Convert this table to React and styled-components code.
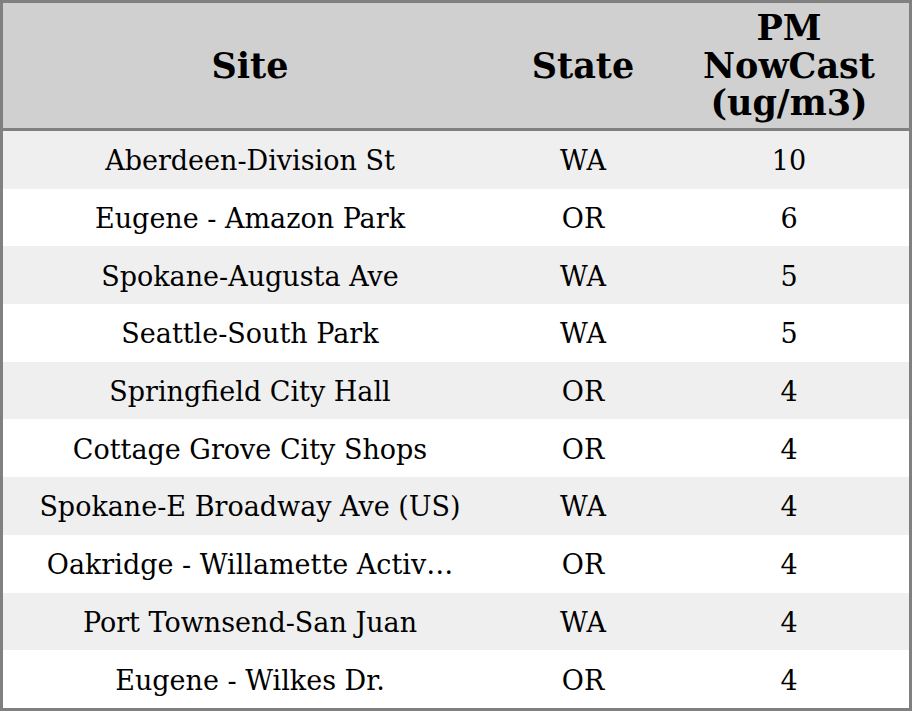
import React from "react";
import styled, { createGlobalStyle } from "styled-components";

const Global = createGlobalStyle`
  html, body { margin: 0; padding: 0; background: #ffffff; }
  body { font-family: "DejaVu Serif", "Liberation Serif", serif; }
`;

const Table = styled.table`
  width: 912px;
  border-collapse: separate;
  border-spacing: 0;
  border: 3px solid #808080;
  table-layout: fixed;
  font-family: "DejaVu Serif", "Liberation Serif", serif;
  color: #000;
`;

const Col = styled.col`
  width: ${(p) => p.$w}px;
`;

const HeadCell = styled.th`
  height: 125px;
  padding: 0 4px;
  background: #d0d0d0;
  border-bottom: 3px solid #808080;
  font-size: 35px;
  font-weight: bold;
  line-height: 37.5px;
  text-align: center;
  vertical-align: middle;
`;

const Row = styled.tr`
  background: ${(p) => (p.$striped ? "#efefef" : "#ffffff")};
`;

const Cell = styled.td`
  height: 55.7px;
  padding: 2px 0 0 0;
  font-size: 27px;
  line-height: 31px;
  text-align: center;
  vertical-align: middle;
  white-space: nowrap;
`;

const rows = [
  ["Aberdeen-Division St", "WA", "10"],
  ["Eugene - Amazon Park", "OR", "6"],
  ["Spokane-Augusta Ave", "WA", "5"],
  ["Seattle-South Park", "WA", "5"],
  ["Springfield City Hall", "OR", "4"],
  ["Cottage Grove City Shops", "OR", "4"],
  ["Spokane-E Broadway Ave (US)", "WA", "4"],
  ["Oakridge - Willamette Activ…", "OR", "4"],
  ["Port Townsend-San Juan", "WA", "4"],
  ["Eugene - Wilkes Dr.", "OR", "4"],
];

export default function App() {
  return (
    <>
      <Global />
      <Table>
        <colgroup>
          <Col $w={494} />
          <Col $w={172} />
          <Col $w={240} />
        </colgroup>
        <thead>
          <tr>
            <HeadCell>Site</HeadCell>
            <HeadCell>State</HeadCell>
            <HeadCell>
              PM
              <br />
              NowCast
              <br />
              (ug/m3)
            </HeadCell>
          </tr>
        </thead>
        <tbody>
          {rows.map((r, i) => (
            <Row key={i} $striped={i % 2 === 0}>
              <Cell>{r[0]}</Cell>
              <Cell>{r[1]}</Cell>
              <Cell>{r[2]}</Cell>
            </Row>
          ))}
        </tbody>
      </Table>
    </>
  );
}
